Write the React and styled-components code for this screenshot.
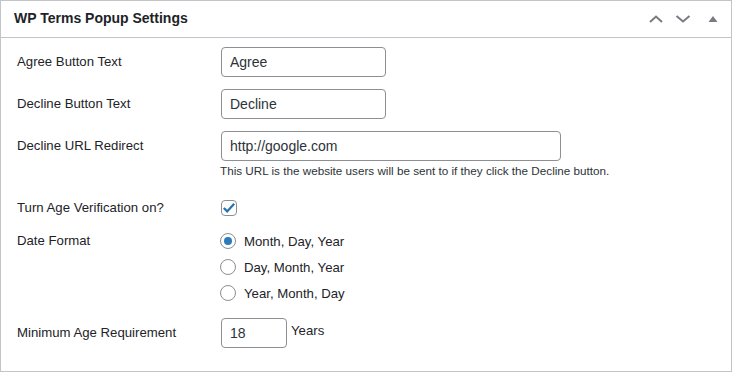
import React from 'react'
import styled, { createGlobalStyle } from 'styled-components'

const GlobalStyle = createGlobalStyle`
    html, body {
        margin: 0;
        padding: 0;
        background: #f0f0f1;
    }
    body {
        font-family: "Liberation Sans", Arial, sans-serif;
        color: #1d2327;
    }
`

const Postbox = styled.div`
    box-sizing: border-box;
    width: 732px;
    height: 372px;
    background: #fff;
    border: 1px solid #c3c4c7;
`

const Header = styled.div`
    display: flex;
    align-items: center;
    justify-content: space-between;
    height: 36px;
    padding: 0 10px 0 13px;
    border-bottom: 1px solid #c3c4c7;
    h2 {
        margin: 0;
        font-size: 14px;
        font-weight: bold;
        line-height: 1.4;
    }
`

const Handles = styled.div`
    display: flex;
    align-items: center;
    gap: 11px;
    svg {
        display: block;
    }
`

const Body = styled.div`
    display: flex;
    flex-direction: column;
    gap: 12px;
    padding: 9px 16px 0;
`

const Row = styled.div`
    display: flex;
    align-items: ${p => (p.$center ? 'center' : 'flex-start')};
`

const Label = styled.div`
    width: 204px;
    flex-shrink: 0;
    font-size: 13.2px;
    line-height: ${p => p.$lh || 30}px;
`

const Field = styled.div`
    display: flex;
    flex-direction: column;
`

const Input = styled.input`
    box-sizing: border-box;
    width: ${p => p.$w}px;
    height: 30px;
    margin: 0;
    padding: 0 8px;
    border: 1px solid #8c8f94;
    border-radius: 4px;
    background: #fff;
    font-family: "Liberation Sans", Arial, sans-serif;
    font-size: 14px;
    color: #2c3338;
    outline: none;
`

const Description = styled.p`
    margin: 2px 0 9px -1px;
    font-size: 11.7px;
    line-height: 16px;
    color: #2c3338;
`

const Check = styled.span`
    box-sizing: border-box;
    display: flex;
    align-items: center;
    justify-content: center;
    width: 16px;
    height: 16px;
    border: 1px solid #8c8f94;
    border-radius: 4px;
    background: #fff;
`

const Options = styled.div`
    display: flex;
    flex-direction: column;
    margin-left: -1px;
`

const Option = styled.label`
    display: flex;
    align-items: center;
    gap: 8px;
    height: 26px;
    font-size: 13.2px;
`

const Radio = styled.span`
    box-sizing: border-box;
    display: flex;
    align-items: center;
    justify-content: center;
    width: 16px;
    height: 16px;
    border: 1px solid #8c8f94;
    border-radius: 50%;
    background: #fff;
    &::after {
        content: '';
        display: ${p => (p.$on ? 'block' : 'none')};
        width: 8px;
        height: 8px;
        border-radius: 50%;
        background: #2d7bbd;
    }
`

const Unit = styled.span`
    margin-left: 4px;
    font-size: 13.2px;
    line-height: 26px;
    align-self: flex-start;
`

const dateFormats = ['Month, Day, Year', 'Day, Month, Year', 'Year, Month, Day']

export default function App() {
    return (
        <>
            <GlobalStyle />
            <Postbox>
                <Header>
                    <h2>WP Terms Popup Settings</h2>
                    <Handles>
                        <svg width="16" height="16" viewBox="0 0 16 16">
                            <path d="M2 11 L8 5.5 L14 11" fill="none" stroke="#787c82" strokeWidth="2" />
                        </svg>
                        <svg width="16" height="16" viewBox="0 0 16 16">
                            <path d="M1.5 5 L8 10.5 L14.5 5" fill="none" stroke="#787c82" strokeWidth="2" />
                        </svg>
                        <svg width="16" height="16" viewBox="0 0 16 16" style={{ marginLeft: 3 }}>
                            <path d="M3.5 11 L8 5 L12.5 11 Z" fill="#787c82" />
                        </svg>
                    </Handles>
                </Header>
                <Body>
                    <Row>
                        <Label>Agree Button Text</Label>
                        <Input $w={165} defaultValue="Agree" />
                    </Row>
                    <Row>
                        <Label>Decline Button Text</Label>
                        <Input $w={165} defaultValue="Decline" />
                    </Row>
                    <Row>
                        <Label>Decline URL Redirect</Label>
                        <Field>
                            <Input $w={340} defaultValue="http://google.com" />
                            <Description>
                                This URL is the website users will be sent to if they click the Decline button.
                            </Description>
                        </Field>
                    </Row>
                    <Row $center>
                        <Label $lh={16}>Turn Age Verification on?</Label>
                        <Check>
                            <svg width="14" height="14" viewBox="0 0 14 14">
                                <path d="M1.8 7 L5.2 10.4 L12.2 2.8" fill="none" stroke="#2271b1" strokeWidth="2.2" />
                            </svg>
                        </Check>
                    </Row>
                    <Row>
                        <Label $lh={26}>Date Format</Label>
                        <Options>
                            {dateFormats.map((f, i) => (
                                <Option key={f}>
                                    <Radio $on={i === 0} />
                                    {f}
                                </Option>
                            ))}
                        </Options>
                    </Row>
                    <Row>
                        <Label>Minimum Age Requirement</Label>
                        <Input $w={66} defaultValue="18" />
                        <Unit>Years</Unit>
                    </Row>
                </Body>
            </Postbox>
        </>
    )
}
